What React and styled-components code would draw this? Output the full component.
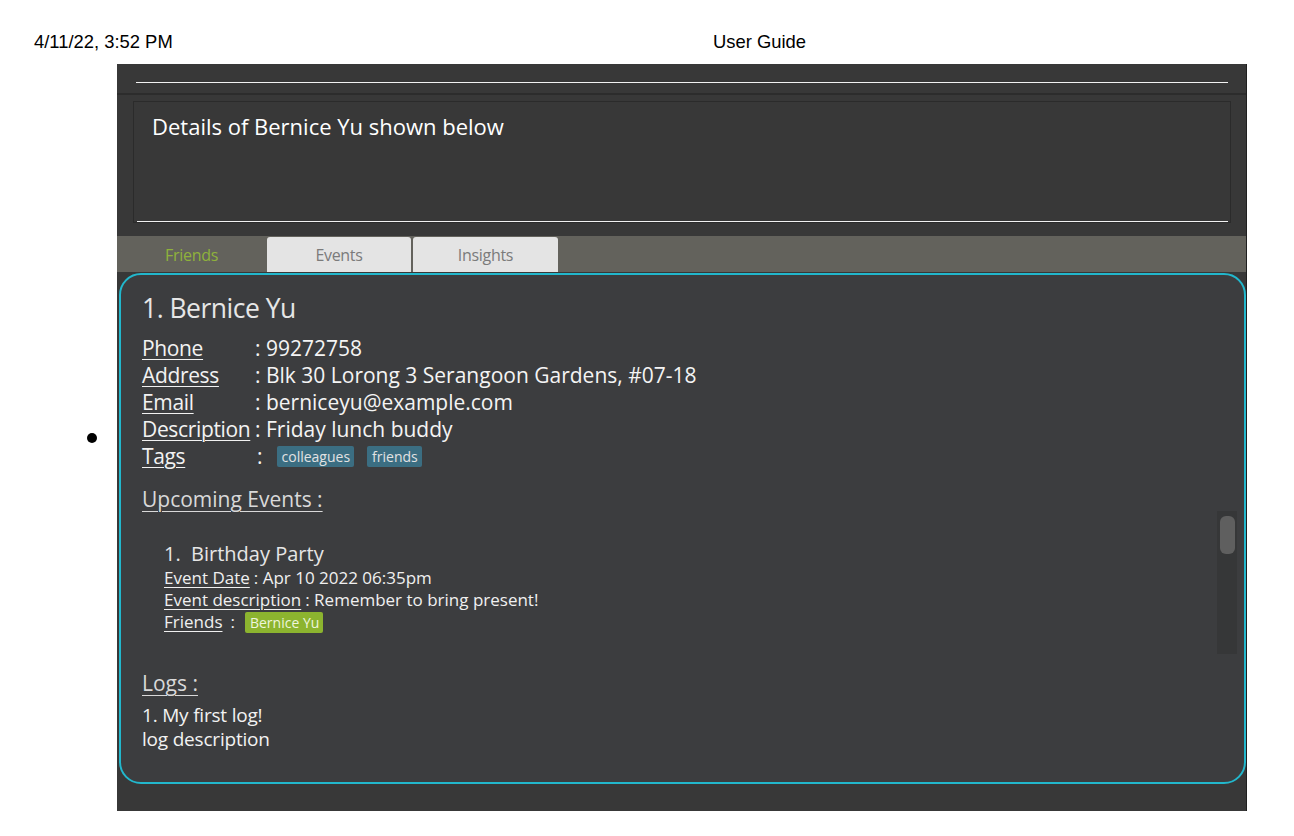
import React from "react";
import styled, { createGlobalStyle } from "styled-components";

const Global = createGlobalStyle`
  html, body { margin: 0; padding: 0; background: #ffffff; }
  body { width: 1294px; height: 836px; overflow: hidden; font-family: "Liberation Sans", Arial, sans-serif; }
`;

const APP_FONT = `"Open Sans", "Noto Sans", sans-serif`;

const PrintHeader = styled.header`
  display: grid;
  grid-template-columns: 679px 1fr;
  padding: 32px 0 0 34px;
  height: 64px;
  box-sizing: border-box;
  font-size: 18.4px;
  color: #000;
  line-height: 20px;
`;

const Row = styled.div`
  display: flex;
  align-items: center;
  height: 747px;
`;

const Bullet = styled.span`
  width: 10px;
  height: 10px;
  border-radius: 50%;
  background: #000;
  margin: 0 20px 0 87px;
`;

const Shot = styled.div`
  width: 1130px;
  height: 747px;
  display: flex;
  background: #383838;
  font-family: ${APP_FONT};
`;

const Main = styled.div`
  flex: 1;
  display: flex;
  flex-direction: column;
  min-width: 0;
`;

const EdgeStrip = styled.div`
  width: 1px;
  background: #1f1f1f;
`;

const CommandArea = styled.div`
  height: 29px;
  padding: 0 18px 0 19px;
  display: flex;
  flex-direction: column;
`;

const CommandLine = styled.div`
  margin-top: 18px;
  height: 1px;
  background: #f2f2f2;
`;

const Divider = styled.div`
  height: 2px;
  background: #2c2c2c;
`;

const ResultArea = styled.div`
  height: 141px;
  padding: 6px 15px 0 16px;
  box-sizing: border-box;
`;

const ResultBox = styled.div`
  height: 122px;
  border: 1px solid #2b2b2b;
  box-sizing: border-box;
  display: flex;
  flex-direction: column;
  justify-content: space-between;
  padding: 10px 2px 0 3px;
`;

const ResultText = styled.div`
  color: #ffffff;
  font-size: 22px;
  line-height: 28px;
  padding-left: 15px;
`;

const ResultLine = styled.div`
  height: 1px;
  background: #f2f2f2;
`;

const TabBar = styled.div`
  height: 36px;
  background: #63625c;
  display: flex;
  align-items: flex-end;
  padding-left: 1px;
  gap: 2px;
`;

const Tab = styled.div`
  width: ${(p) => p.$w}px;
  height: 35px;
  display: flex;
  align-items: center;
  justify-content: center;
  padding-top: 1px;
  box-sizing: border-box;
  font-size: 16px;
  letter-spacing: -0.3px;
  color: ${(p) => (p.$active ? "#8fb23b" : "#7b7b7b")};
  background: ${(p) => (p.$active ? "transparent" : "#e4e4e4")};
  border-radius: 3px 3px 0 0;
`;

const PanelWrap = styled.div`
  flex: 1;
  padding: 1px 0 27px 2px;
  display: flex;
`;

const Panel = styled.div`
  position: relative;
  flex: 1;
  background: #3c3d3f;
  border: 2px solid #22b7cc;
  border-radius: 22px;
  padding: 15px 20px 0 21px;
  color: #ececec;
`;

const Name = styled.div`
  font-size: 26.5px;
  line-height: 36px;
  letter-spacing: -0.5px;
  color: #e6e6e6;
  margin-bottom: 9px;
`;

const FieldGrid = styled.div`
  display: grid;
  grid-template-columns: 113px 1fr;
  font-size: 21px;
  line-height: 27px;
`;

const Label = styled.span`
  text-decoration: underline;
  text-underline-offset: 3px;
  text-decoration-thickness: 1px;
  color: #f2f2f2;
  white-space: nowrap;
  letter-spacing: -0.35px;
`;

const Value = styled.span`
  color: #f4f4f4;
  display: flex;
  align-items: center;
  white-space: pre;
`;

const Colon = styled.span`
  margin: ${(p) => p.$m};
`;

const Chip = styled.span`
  display: inline-block;
  background: ${(p) => p.$bg};
  color: ${(p) => p.$fg || "#e2e2e2"};
  font-size: ${(p) => p.$size || 14}px;
  line-height: 21px;
  padding: 0 4px 0 5px;
  border-radius: 2px;
  margin-right: 13px;
`;

const SectionTitle = styled.div`
  font-size: 21px;
  line-height: 28px;
  color: #d9d9d9;
  text-decoration: underline;
  text-underline-offset: 4px;
  text-decoration-thickness: 1px;
  margin-top: ${(p) => p.$mt}px;
`;

const EventBlock = styled.div`
  margin-top: 28px;
  padding-left: 22px;
`;

const EventTitle = styled.div`
  font-size: 20px;
  line-height: 26px;
  color: #e6e6e6;
  white-space: pre;
`;

const EventLine = styled.div`
  font-size: 17px;
  line-height: 22px;
  color: #f0f0f0;
  display: flex;
  align-items: center;
  white-space: pre;
`;

const SmallLabel = styled.span`
  text-decoration: underline;
  text-underline-offset: 3px;
  text-decoration-thickness: 1px;
  margin-right: 4px;
`;

const LogBlock = styled.div`
  margin-top: 6px;
`;

const LogText = styled.div`
  font-size: 19px;
  line-height: 24px;
  color: #f2f2f2;
  letter-spacing: -0.2px;
`;

const ScrollTrack = styled.div`
  position: absolute;
  right: 7px;
  top: 236px;
  width: 20px;
  height: 143px;
  background: #363738;
  display: flex;
  justify-content: center;
  padding-top: 5px;
  box-sizing: border-box;
`;

const ScrollThumb = styled.div`
  width: 15px;
  height: 38px;
  border-radius: 6px;
  background: #5f5f5f;
`;

export default function App() {
  return (
    <>
      <Global />
      <PrintHeader>
        <span>4/11/22, 3:52 PM</span>
        <span>User Guide</span>
      </PrintHeader>
      <Row>
        <Bullet />
        <Shot>
          <Main>
            <CommandArea>
              <CommandLine />
            </CommandArea>
            <Divider />
            <ResultArea>
              <ResultBox>
                <ResultText>Details of Bernice Yu shown below</ResultText>
                <ResultLine />
              </ResultBox>
            </ResultArea>
            <TabBar>
              <Tab $w={147} $active>Friends</Tab>
              <Tab $w={144}>Events</Tab>
              <Tab $w={145}>Insights</Tab>
            </TabBar>
            <PanelWrap>
              <Panel>
                <Name>1. Bernice Yu</Name>
                <FieldGrid>
                  <Label>Phone</Label>
                  <Value>: 99272758</Value>
                  <Label>Address</Label>
                  <Value>: Blk 30 Lorong 3 Serangoon Gardens, #07-18</Value>
                  <Label>Email</Label>
                  <Value>: berniceyu@example.com</Value>
                  <Label>Description</Label>
                  <Value>: Friday lunch buddy</Value>
                  <Label>Tags</Label>
                  <Value>
                    <Colon $m="0 14px 0 2px">:</Colon>
                    <Chip $bg="#3b6e82">colleagues</Chip>
                    <Chip $bg="#3b6e82">friends</Chip>
                  </Value>
                </FieldGrid>
                <SectionTitle $mt={15}>Upcoming Events :</SectionTitle>
                <EventBlock>
                  <EventTitle>{"1.  Birthday Party"}</EventTitle>
                  <EventLine>
                    <SmallLabel>Event Date</SmallLabel>: Apr 10 2022 06:35pm
                  </EventLine>
                  <EventLine>
                    <SmallLabel>Event description</SmallLabel>: Remember to bring present!
                  </EventLine>
                  <EventLine>
                    <SmallLabel>Friends</SmallLabel>
                    <Colon $m="0 10px 0 4px">:</Colon>
                    <Chip $bg="#8cb42f" $fg="#eef5dc" $size={14}>Bernice Yu</Chip>
                  </EventLine>
                </EventBlock>
                <SectionTitle $mt={36}>Logs :</SectionTitle>
                <LogBlock>
                  <LogText>1. My first log!</LogText>
                  <LogText>log description</LogText>
                </LogBlock>
                <ScrollTrack>
                  <ScrollThumb />
                </ScrollTrack>
              </Panel>
            </PanelWrap>
          </Main>
          <EdgeStrip />
        </Shot>
      </Row>
    </>
  );
}
